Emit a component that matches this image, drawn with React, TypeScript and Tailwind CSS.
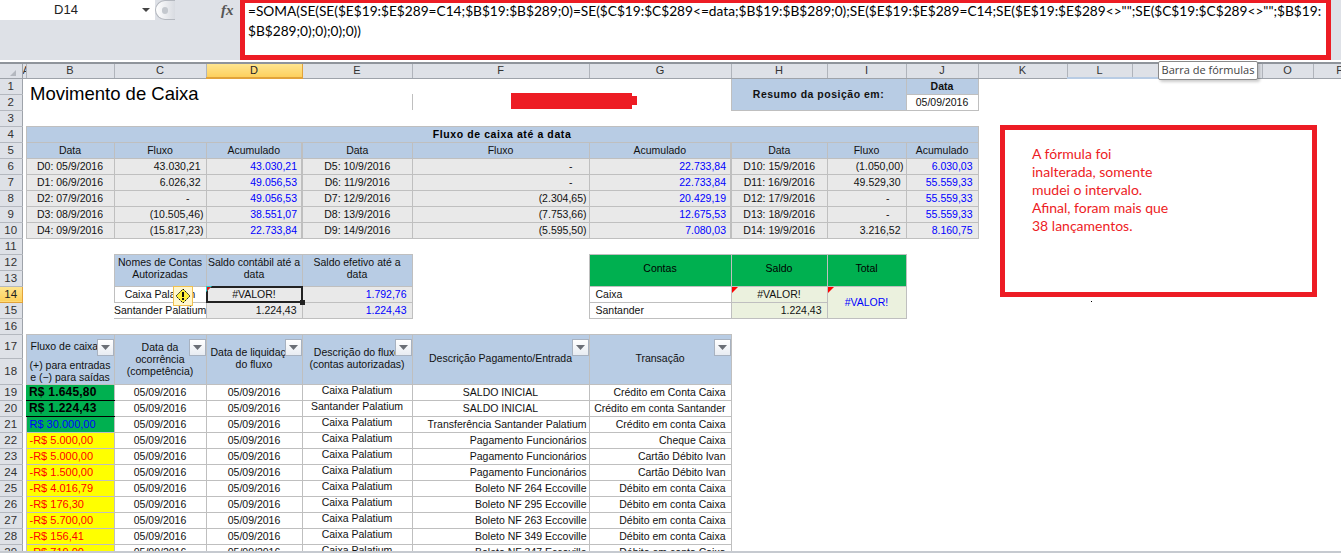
const hd = "p-0 border border-[#bfbfbf] bg-[#b8cce4] text-center align-middle overflow-hidden whitespace-nowrap";
const gray = "p-0 pt-[1px] border border-[#bfbfbf] bg-[#e9e9e9] overflow-hidden whitespace-nowrap";
const plain = "p-0 border border-[#bfbfbf] bg-white overflow-hidden whitespace-nowrap";
const green = "p-0 pb-[3px] border border-[#bfbfbf] bg-[#00b050] text-center overflow-hidden whitespace-nowrap";
const olive = "p-0 border border-[#bfbfbf] bg-[#ebf1de] overflow-hidden whitespace-nowrap";

const widths = [
  "w-[22px]", "w-[4px]", "w-[88px]", "w-[92px]", "w-[96px]", "w-[110px]", "w-[177px]", "w-[142px]",
  "w-[96px]", "w-[79px]", "w-[72px]", "w-[89px]", "w-[65px]", "w-[65px]", "w-[65px]", "w-[51px]", "w-[54px]",
];
// M and N sit under the tooltip in the picture
const letters = ["A", "B", "C", "D", "E", "F", "G", "H", "I", "J", "K", "L", "", " ", "O", "P"];

const summary = [
  ["6", "D0: 05/9/2016", "43.030,21", "43.030,21", "D5: 10/9/2016", "-", "22.733,84", "D10: 15/9/2016", "(1.050,00)", "6.030,03"],
  ["7", "D1: 06/9/2016", "6.026,32", "49.056,53", "D6: 11/9/2016", "-", "22.733,84", "D11: 16/9/2016", "49.529,30", "55.559,33"],
  ["8", "D2: 07/9/2016", "-", "49.056,53", "D7: 12/9/2016", "(2.304,65)", "20.429,19", "D12: 17/9/2016", "-", "55.559,33"],
  ["9", "D3: 08/9/2016", "(10.505,46)", "38.551,07", "D8: 13/9/2016", "(7.753,66)", "12.675,53", "D13: 18/9/2016", "-", "55.559,33"],
  ["10", "D4: 09/9/2016", "(15.817,23)", "22.733,84", "D9: 14/9/2016", "(5.595,50)", "7.080,03", "D14: 19/9/2016", "3.216,52", "8.160,75"],
];

const moves = [
  ["19", "R$ 1.645,80", "Caixa Palatium", "SALDO INICIAL", "Crédito em Conta Caixa"],
  ["20", "R$ 1.224,43", "Santander Palatium", "SALDO INICIAL", "Crédito em conta Santander"],
  ["21", "R$ 30.000,00", "Caixa Palatium", "Transferência Santander Palatium", "Crédito em conta Caixa"],
  ["22", "-R$ 5.000,00", "Caixa Palatium", "Pagamento Funcionários", "Cheque Caixa"],
  ["23", "-R$ 5.000,00", "Caixa Palatium", "Pagamento Funcionários", "Cartão Débito Ivan"],
  ["24", "-R$ 1.500,00", "Caixa Palatium", "Pagamento Funcionários", "Cartão Débito Ivan"],
  ["25", "-R$ 4.016,79", "Caixa Palatium", "Boleto NF 264 Eccoville", "Débito em conta Caixa"],
  ["26", "-R$ 176,30", "Caixa Palatium", "Boleto NF 295 Eccoville", "Débito em conta Caixa"],
  ["27", "-R$ 5.700,00", "Caixa Palatium", "Boleto NF 263 Eccoville", "Débito em conta Caixa"],
  ["28", "-R$ 156,41", "Caixa Palatium", "Boleto NF 349 Eccoville", "Débito em conta Caixa"],
  ["29", "-R$ 719,00", "Caixa Palatium", "Boleto NF 347 Eccoville", "Débito em conta Caixa"],
];

function RowHead({ n, active }: { n: string; active?: boolean }) {
  return (
    <td
      className={
        active
          ? "p-0 text-center text-[11.5px] text-[#222] border-b border-r border-[#e2a33a] bg-gradient-to-b from-[#ffe58f] to-[#fdd05c]"
          : "p-0 text-center text-[11.5px] text-[#333] border-b border-r border-b-[#b4b8bf] border-r-[#9ea3aa] bg-[#dee1e7]"
      }
    >
      {n}
    </td>
  );
}

function Filter() {
  return (
    <div className="absolute right-0 top-[4px] z-10 w-[17px] h-[17px] flex items-center justify-center bg-gradient-to-b from-white to-[#e8ecf2] border border-[#a8b2c0]">
      <svg width="9" height="5" viewBox="0 0 9 5">
        <path d="M0 0h9L4.5 5z" fill="#6b6f76" />
      </svg>
    </div>
  );
}

function Money({ v }: { v: string }) {
  const dash = v === "-";
  return <div className={dash ? "text-right pr-[16px]" : v.startsWith("(") ? "text-right pr-[2px]" : "text-right pr-[5px]"}>{v}</div>;
}

function Sheet() {
  return (
    <table className="table-fixed border-collapse w-[1367px] text-[10.5px] leading-[13px] text-[#111]">
      <colgroup>
        {widths.map((w, i) => (
          <col key={i} className={w} />
        ))}
      </colgroup>
      <tbody>
        <tr className="h-[13px]">
          <td className="p-0 bg-[#dee1e7] border-r border-b border-[#9ea3aa] relative">
            <div className="absolute right-[6px] bottom-[2px] w-0 h-0 border-l-[6px] border-b-[6px] border-l-transparent border-b-[#b4b8bf]" />
          </td>
          {letters.map((l) => (
            <td
              key={l}
              className={
                l === "D"
                  ? "p-0 text-center text-[11px] overflow-hidden text-[#222] border-x border-b-2 border-[#e2a33a] bg-gradient-to-b from-[#ffe58f] to-[#fdd05c]"
                  : "p-0 text-center text-[11px] overflow-hidden text-[#333] bg-[#dee1e7] border-r border-b border-r-[#b0b4bb] border-b-[#9ea3aa]"
              }
            >
              {l}
            </td>
          ))}
        </tr>

        <tr className="h-[16px]">
          <RowHead n="1" />
          <td />
          <td colSpan={3} rowSpan={2} className="p-0 pl-[4px] pb-[2px] text-[18.5px] leading-[22px] text-black whitespace-nowrap align-middle">
            Movimento de Caixa
          </td>
          <td />
          <td colSpan={2} rowSpan={2} />
          <td colSpan={2} rowSpan={2} className={`${hd} font-bold tracking-[0.5px]`}>
            Resumo da posição em:
          </td>
          <td className={`${hd} font-bold`}>Data</td>
          <td />
          <td colSpan={2} className="p-0 border-t-2 border-t-[#b8cce4]" />
        </tr>
        <tr className="h-[16px]">
          <RowHead n="2" />
          <td />
          <td className="p-0 border-r border-[#bfbfbf]" />
          <td className={`${plain} text-center`}>05/09/2016</td>
        </tr>
        <tr className="h-[16px]">
          <RowHead n="3" />
        </tr>

        <tr className="h-[16px]">
          <RowHead n="4" />
          <td />
          <td colSpan={9} className={`${hd} font-bold tracking-[0.6px] text-black`}>
            Fluxo de caixa até a data
          </td>
        </tr>
        <tr className="h-[16px]">
          <RowHead n="5" />
          <td />
          {["Data", "Fluxo", "Acumulado", "Data", "Fluxo", "Acumulado", "Data", "Fluxo", "Acumulado"].map((t, i) => (
            <td key={i} className={i === 2 || i === 5 ? `${hd} border-r-2` : hd}>
              {t}
            </td>
          ))}
        </tr>
        {summary.map((r) => (
          <tr key={r[0]} className="h-[16px]">
            <RowHead n={r[0]} />
            <td />
            <td className={`${gray} text-center`}>{r[1]}</td>
            <td className={gray}>
              <Money v={r[2]} />
            </td>
            <td className={`${gray} border-r-2 text-right pr-[4px] text-[#0000ff]`}>{r[3]}</td>
            <td className={`${gray} text-center`}>{r[4]}</td>
            <td className={gray}>
              <Money v={r[5]} />
            </td>
            <td className={`${gray} border-r-2 text-right pr-[4px] text-[#0000ff]`}>{r[6]}</td>
            <td className={`${gray} text-center`}>{r[7]}</td>
            <td className={gray}>
              <Money v={r[8]} />
            </td>
            <td className={`${gray} text-right pr-[5px] text-[#0000ff]`}>{r[9]}</td>
          </tr>
        ))}
        <tr className="h-[16px]">
          <RowHead n="11" />
        </tr>

        <tr className="h-[16px]">
          <RowHead n="12" />
          <td colSpan={2} />
          <td rowSpan={2} className={`${hd} pb-[4px] leading-[12px]`}>
            Nomes de Contas
            <br />
            Autorizadas
          </td>
          <td rowSpan={2} className={`${hd} pb-[4px] leading-[12px]`}>
            Saldo contábil até a
            <br />
            data
          </td>
          <td rowSpan={2} className={`${hd} pb-[4px] leading-[12px]`}>
            Saldo efetivo até a
            <br />
            data
          </td>
          <td />
          <td rowSpan={2} className={`${green} text-black`}>
            Contas
          </td>
          <td rowSpan={2} className={`${green} text-black`}>
            Saldo
          </td>
          <td rowSpan={2} className={`${green} text-black`}>
            Total
          </td>
        </tr>
        <tr className="h-[16px]">
          <RowHead n="13" />
          <td colSpan={2} />
          <td />
        </tr>
        <tr className="h-[16px]">
          <RowHead n="14" active />
          <td colSpan={2} />
          <td className={`${plain} text-center relative !overflow-visible`}>
            Caixa Palatium
            <div className="absolute right-[13px] -top-px z-20 w-[20px] h-[20px] flex items-center justify-center bg-[#fff7cf] border border-[#f2c14e]">
              <svg width="16" height="16" viewBox="0 0 16 16">
                <path d="M8 1l7 7-7 7-7-7z" fill="#ffef3a" stroke="#111" strokeWidth="1" strokeDasharray="2 1" />
                <rect x="7" y="4" width="2" height="5" fill="#111" />
                <rect x="7" y="10" width="2" height="2" fill="#111" />
              </svg>
            </div>
          </td>
          <td className={`${gray} text-center relative !overflow-visible`}>
            #VALOR!
            <div className="absolute -left-px -top-px -right-px -bottom-px z-10 border-2 border-[#222]" />
            <div className="absolute -left-px -top-px z-10 w-0 h-0 border-t-[6px] border-r-[6px] border-t-[#22d3d3] border-r-transparent" />
            <div className="absolute left-0 top-0 z-10 w-0 h-0 border-t-[4px] border-r-[4px] border-t-[#e11] border-r-transparent" />
            <div className="absolute -right-[3px] -bottom-[3px] z-20 w-[5px] h-[5px] bg-[#222]" />
          </td>
          <td className={`${gray} text-right pr-[5px] text-[#0000ff]`}>1.792,76</td>
          <td />
          <td className={`${plain} pl-[6px]`}>Caixa</td>
          <td className={`${olive} text-center relative`}>
            <div className="absolute left-0 top-0 w-0 h-0 border-t-[6px] border-r-[6px] border-t-[#ff0000] border-r-transparent" />
            #VALOR!
          </td>
          <td rowSpan={2} className={`${olive} text-center text-[#0000ff] relative`}>
            <div className="absolute left-0 top-0 w-0 h-0 border-t-[6px] border-r-[6px] border-t-[#ff0000] border-r-transparent" />
            #VALOR!
          </td>
        </tr>
        <tr className="h-[16px]">
          <RowHead n="15" />
          <td colSpan={2} />
          <td className="p-0 border-b border-[#bfbfbf] bg-white text-center overflow-hidden whitespace-nowrap">Santander Palatium</td>
          <td className={`${gray} text-right pr-[5px]`}>1.224,43</td>
          <td className={`${gray} text-right pr-[5px] text-[#0000ff]`}>1.224,43</td>
          <td />
          <td className={`${plain} pl-[6px]`}>Santander</td>
          <td className={`${olive} text-right pr-[5px]`}>1.224,43</td>
        </tr>
        <tr className="h-[16px]">
          <RowHead n="16" />
        </tr>

        <tr className="h-[24px]">
          <RowHead n="17" />
          <td />
          <td className="p-0 pl-[4px] bg-[#b8cce4] border-t border-l border-r border-[#bfbfbf] relative overflow-hidden whitespace-nowrap align-middle">
            Fluxo de caixa
            <Filter />
          </td>
          <td rowSpan={2} className={`${hd} relative pb-[1px] leading-[12px]`}>
            Data da
            <br />
            ocorrência
            <br />
            (competência)
            <Filter />
          </td>
          <td rowSpan={2} className={`${hd} relative pb-[3px] leading-[12px]`}>
            Data de liquidação
            <br />
            do fluxo
            <Filter />
          </td>
          <td rowSpan={2} className={`${hd} relative pb-[3px] leading-[12px]`}>
            Descrição do fluxo
            <br />
            (contas autorizadas)
            <Filter />
          </td>
          <td rowSpan={2} className={`${hd} relative pb-[1px]`}>
            Descrição Pagamento/Entrada
            <Filter />
          </td>
          <td rowSpan={2} className={`${hd} relative pb-[1px]`}>
            Transação
            <Filter />
          </td>
        </tr>
        <tr className="h-[26px]">
          <RowHead n="18" />
          <td />
          <td className="p-0 bg-[#b8cce4] border-b border-l border-r border-[#bfbfbf] text-center leading-[12px] overflow-hidden whitespace-nowrap">
            (+) para entradas
            <br />e (−) para saídas
          </td>
        </tr>

        {moves.map((r, i) => (
          <tr key={r[0]} className="h-[16px]">
            <RowHead n={r[0]} />
            <td />
            {i < 2 ? (
              <td className="p-0 pl-[3px] bg-[#00b050] border-b border-black text-black font-bold text-[12px] tracking-[0.2px] overflow-hidden whitespace-nowrap">
                {r[1]}
              </td>
            ) : i === 2 ? (
              <td className="p-0 pl-[3px] bg-[#00b050] border border-[#bfbfbf] text-[#0000ff] text-[11px] overflow-hidden whitespace-nowrap">{r[1]}</td>
            ) : (
              <td className="p-0 pl-[3px] bg-[#ffff00] border border-[#bfbfbf] text-[#ff0000] text-[11px] overflow-hidden whitespace-nowrap">{r[1]}</td>
            )}
            <td className={`${plain} text-center`}>05/09/2016</td>
            <td className={`${plain} text-center`}>05/09/2016</td>
            <td className={`${plain} text-center`}>
              <div className="-translate-y-[2px]">{r[2]}</div>
            </td>
            <td className={i < 2 ? `${plain} text-center` : `${plain} text-right pr-[2px]`}>{r[3]}</td>
            <td className={`${plain} text-right pr-[5px]`}>{r[4]}</td>
          </tr>
        ))}
      </tbody>
    </table>
  );
}

export default function App() {
  return (
    <div className="relative w-[1341px] h-[553px] overflow-hidden bg-white font-['Liberation_Sans',sans-serif]">
      <div className="flex h-[60px] bg-[#dee1e7]">
        <div className="w-[240px] flex items-start shrink-0">
          <div className="w-[155px] h-[20px] bg-white flex items-center text-[13px] text-[#222]">
            <span className="w-[132px] text-center">D14</span>
            <svg width="8" height="4" viewBox="0 0 8 4" className="ml-[10px]">
              <path d="M0 0h8L4 4z" fill="#444" />
            </svg>
          </div>
          <div className="w-[20px] h-[20px] rounded-l-full border border-r-0 border-[#b4b8bf] bg-gradient-to-r from-white to-[#d8dbe1] flex items-center pl-[6px]">
            <div className="w-[6px] h-[7px] rounded-full bg-[#c4c8ce]" />
          </div>
          <span className="ml-[46px] h-[20px] flex items-center font-['Liberation_Serif',serif] italic font-bold text-[15px] text-[#555]">fx</span>
        </div>
        <div className="w-[1091px] h-[60px] shrink-0 bg-white border-[5px] border-t-[3px] border-[#ed1c24] pl-[3px] text-[13.7px] leading-[20px] text-black font-['Lato',sans-serif] whitespace-nowrap overflow-hidden">
          <div className="-mt-[2px]">
            =SOMA(SE(SE($E$19:$E$289=C14;$B$19:$B$289;0)=SE($C$19:$C$289&lt;=data;$B$19:$B$289;0);SE($E$19:$E$289=C14;SE($E$19:$E$289&lt;&gt;"";SE($C$19:$C$289&lt;&gt;"";$B$19:
            <br />
            $B$289;0);0);0);0))
          </div>
        </div>
      </div>
      <div className="h-[4px] bg-white border-b-2 border-[#8f949b]" />
      <div className="h-[487px] overflow-hidden">
        <Sheet />
      </div>
      <div className="h-[2px] bg-[#c6cad0]" />

      {/* things drawn over the sheet */}
      <div className="absolute left-[511px] top-[93px] w-[121px] h-[16px] bg-[#ed1c24]" />
      <div className="absolute left-[632px] top-[96px] w-[5px] h-[9px] bg-[#ed1c24]" />

      <div className="absolute left-[1000px] top-[125px] w-[317px] h-[172px] bg-white border-[5px] border-[#ed1c24] pl-[27px] pt-[15px] text-[14px] leading-[18px] text-[#ed1c24] font-['Lato',sans-serif]">
        A fórmula foi
        <br />
        inalterada, somente
        <br />
        mudei o intervalo.
        <br />
        Afinal, foram mais que
        <br />
        38 lançamentos.
      </div>
      <div className="absolute left-[1091px] top-[301px] w-[1px] h-[1px] bg-black" />

      <div className="absolute left-[1158px] top-[61px] w-[100px] h-[19px] flex items-center justify-center rounded-[2px] bg-white border border-[#8a8a8a] shadow-[2px_2px_3px_rgba(0,0,0,0.2)] text-[11px] text-[#444] font-['Open_Sans',sans-serif] whitespace-nowrap">
        Barra de fórmulas
      </div>
    </div>
  );
}
